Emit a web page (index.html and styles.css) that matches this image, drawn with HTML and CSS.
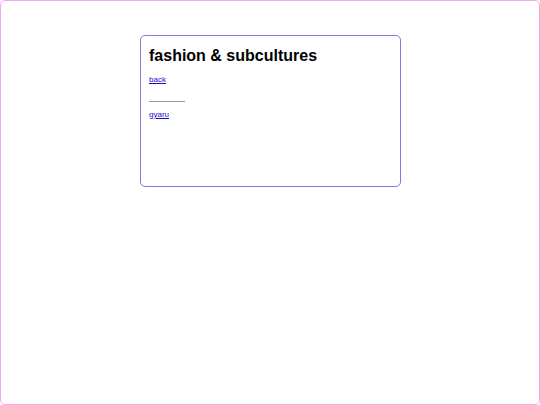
FILE: index.html
```html
<!DOCTYPE html>
<html lang="en">
<head>
  <meta charset="UTF-8">
  <title>fashion &amp; subcultures</title>
  <link rel="stylesheet" href="styles.css">
</head>
<body>
  <div class="pagina">
    <div class="caixa">
      <h1>fashion &amp; subcultures</h1>
      <a href="#">back</a>
      <hr class="linha">
      <a href="#">gyaru</a>
    </div>
  </div>
</body>
</html>
```
FILE: styles.css
```css
body {
  margin: 0;
  padding: 0;
  background-color: #ffffff;
  font-family: "Liberation Sans", Arial, Helvetica, sans-serif;
  font-size: 8px;
}

.pagina {
  box-sizing: border-box;
  height: 405px;
  border: 1px solid #f4a6f0;
  border-radius: 5px;
  padding-top: 34px;
  padding-left: 1px;
}

.caixa {
  box-sizing: border-box;
  width: 261px;
  height: 152px;
  margin: 0 auto;
  padding: 8px;
  border: 1px solid #8577e3;
  border-radius: 5px;
}

h1 {
  font-size: 16px;
  margin: 3px 0 10px 0;
}

a {
  display: block;
  color: #1a0dcc;
}

.linha {
  width: 36px;
  margin: 17px 0 8px 0;
  border: 0;
  border-top: 1px solid #999999;
}
```
